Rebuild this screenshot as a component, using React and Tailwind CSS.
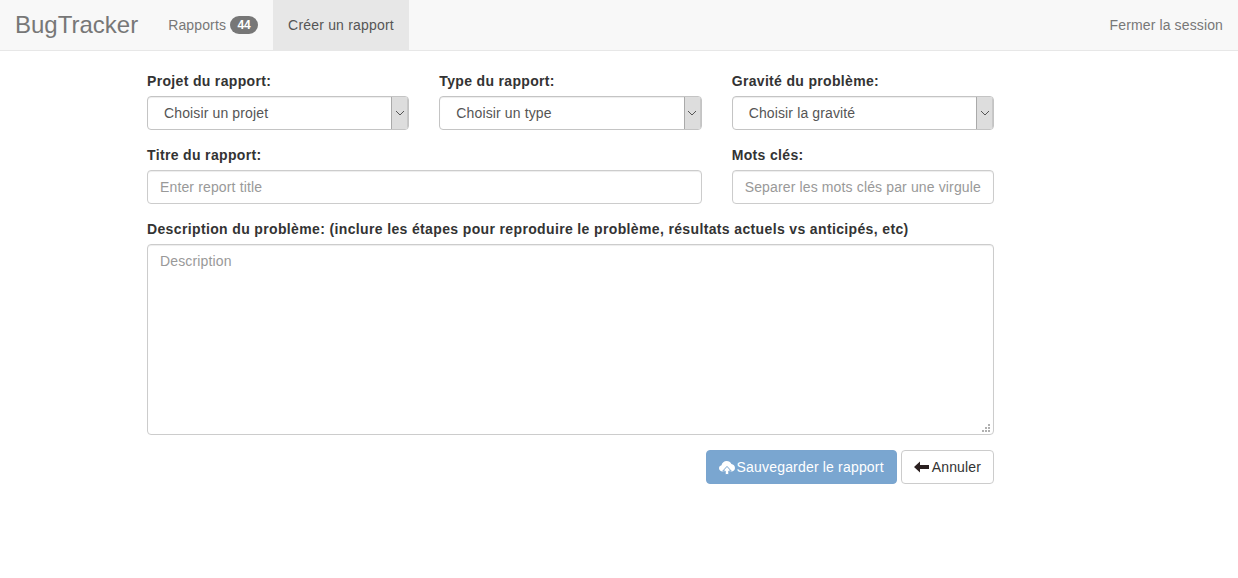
function Chevron() {
  return (
    <svg width="10" height="6" viewBox="0 0 10 6" fill="none" stroke="#555" strokeWidth="1">
      <path d="M1 1l4 4 4-4" />
    </svg>
  );
}

function FakeSelect({ label }) {
  return (
    <div>
      <div className="mb-[5px] h-5 text-sm font-bold leading-5 tracking-[0.33px] text-[#333]">{label.title}</div>
      <div className="flex h-[34px] items-stretch overflow-hidden rounded border border-[#c4c4c4] bg-white shadow-[inset_0_1px_1px_rgba(0,0,0,0.075)]">
        <div className="flex-1 pl-4 text-sm leading-8 tracking-[0.13px] text-[#555]">{label.value}</div>
        <div className="flex w-[17px] items-center justify-center border-l border-r border-l-[#aaaaaa] border-r-[#c8c8c8] bg-[#dddddd]">
          <Chevron />
        </div>
      </div>
    </div>
  );
}

export default function App() {
  return (
    <div className="min-h-[578px] bg-white font-['Liberation_Sans',Arial,sans-serif] text-sm text-[#333]">
      <nav className="flex h-[51px] items-stretch border-b border-[#e7e7e7] bg-[#f8f8f8] text-[#777]">
        <a className="px-[15px] text-2xl leading-[50px]">BugTracker</a>
        <a className="flex items-center px-[15px] leading-5 tracking-[0.14px]">
          Rapports
          <span className="ml-1 h-[18px] w-7 rounded-[10px] bg-[#777] text-center text-xs font-bold leading-[18px] tracking-normal text-white">44</span>
        </a>
        <a className="flex items-center bg-[#e7e7e7] px-[15px] tracking-[0.19px] text-[#555]">Créer un rapport</a>
        <a className="ml-auto flex items-center pr-[15px] tracking-[0.13px]">Fermer la session</a>
      </nav>

      <form className="ml-[147px] w-[847px] pt-5">
        <div className="grid grid-cols-3 gap-x-[30px] gap-y-[15px]">
          <FakeSelect label={{ title: "Projet du rapport:", value: "Choisir un projet" }} />
          <FakeSelect label={{ title: "Type du rapport:", value: "Choisir un type" }} />
          <FakeSelect label={{ title: "Gravité du problème:", value: "Choisir la gravité" }} />
          <div className="col-span-2">
            <div className="mb-[5px] h-5 font-bold leading-5 tracking-[0.35px]">Titre du rapport:</div>
            <input
              placeholder="Enter report title"
              className="block h-[34px] w-full rounded border border-[#ccc] bg-white px-3 text-sm tracking-[0.14px] text-[#555] shadow-[inset_0_1px_1px_rgba(0,0,0,0.075)] placeholder:text-[#999] outline-none"
            />
          </div>
          <div>
            <div className="mb-[5px] h-5 font-bold leading-5 tracking-[0.35px]">Mots clés:</div>
            <input
              placeholder="Separer les mots clés par une virgule"
              className="block h-[34px] w-full rounded border border-[#ccc] bg-white px-3 text-sm tracking-[0.14px] text-[#555] shadow-[inset_0_1px_1px_rgba(0,0,0,0.075)] placeholder:text-[#999] outline-none"
            />
          </div>
        </div>

        <div className="mt-[15px]">
          <div className="mb-[5px] h-5 font-bold leading-5 tracking-[0.36px]">
            Description du problème: (inclure les étapes pour reproduire le problème, résultats actuels vs anticipés, etc)
          </div>
          <div className="relative">
            <textarea
              placeholder="Description"
              className="block h-[191px] w-full resize-none rounded border border-[#ccc] bg-white px-3 py-1.5 text-sm leading-5 tracking-[0.14px] text-[#555] shadow-[inset_0_1px_1px_rgba(0,0,0,0.075)] placeholder:text-[#999] outline-none"
            />
            <svg width="9" height="8" viewBox="0 0 9 8" className="absolute bottom-[3px] right-[3px]" fill="#b0b0b0">
              <rect x="6" y="0" width="2" height="2" />
              <rect x="3" y="3" width="2" height="2" />
              <rect x="6" y="3" width="2" height="2" />
              <rect x="0" y="6" width="2" height="2" />
              <rect x="3" y="6" width="2" height="2" />
              <rect x="6" y="6" width="2" height="2" />
            </svg>
          </div>
        </div>

        <div className="mt-[15px] flex justify-end gap-1">
          <button type="button" className="flex h-[34px] items-center rounded border border-[#7aa5cf] bg-[#7aa6d0] px-3 text-sm tracking-[0.18px] text-white">
            <svg width="16" height="15" viewBox="0 0 16 15" className="mr-[2px] shrink-0">
              <path fill="#fff" d="M3.6 11.5C1.6 11.5 0 10.2 0 8.3c0-1.5 1-2.7 2.5-3C3 2.6 5.2 1 7.6 1c2.2 0 4 1.2 4.8 3.1C14.4 4.3 16 6 16 8c0 2-1.6 3.5-3.6 3.5z" />
              <path fill="#fff" stroke="#7aa6d0" strokeWidth="1" d="M8 6.4l4.2 4.6H9.8v3.6H6.2V11H3.8z" />
            </svg>
            Sauvegarder le rapport
          </button>
          <button type="button" className="flex h-[34px] items-center rounded border border-[#ccc] bg-white px-3 text-sm tracking-[0.14px] text-[#333]">
            <svg width="15" height="12" viewBox="0 0 15 12" className="mr-[3px] shrink-0" fill="#2b2020">
              <path d="M0 6l6-5.5V4h9v4H6v3.5z" />
            </svg>
            Annuler
          </button>
        </div>
      </form>
    </div>
  );
}
